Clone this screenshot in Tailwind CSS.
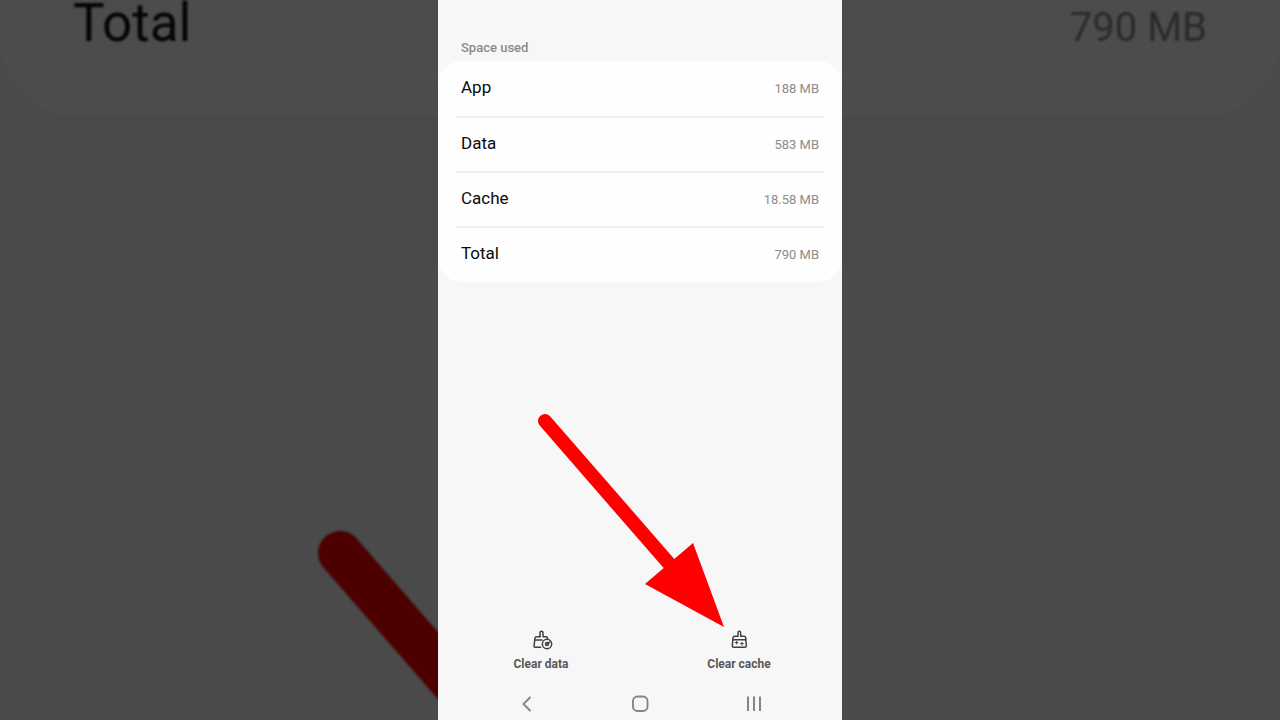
<!DOCTYPE html>
<html lang="en">

<head>
    <meta charset="UTF-8">
    <meta name="viewport" content="width=device-width, initial-scale=1.0">
    <title>Storage</title>
    <script src="https://cdn.jsdelivr.net/npm/@tailwindcss/browser@4"></script>
</head>

<body class="min-h-screen grid overflow-hidden bg-[#4a4a4a] font-[Roboto,sans-serif]">
    <!-- Dimmed, enlarged backdrop -->
    <div class="relative col-start-1 row-start-1 h-screen overflow-hidden" aria-hidden="true">
        <div class="flex items-start justify-between h-[117px] px-[73px] rounded-b-[76px] bg-[#4c4c4c] blur-[1px]">
            <span class="text-[53px] leading-[47px] text-[#050505]">Total</span>
            <span class="text-[40px] leading-[56px] text-[#2a2a2a]">790 MB</span>
        </div>
        <svg class="absolute left-0 top-0 blur-[1px]" width="640" height="720" viewBox="0 0 640 720" fill="none">
            <path d="M340 553L600 852" stroke="#4d0000" stroke-width="44" stroke-linecap="round" />
        </svg>
    </div>

    <!-- Phone screen -->
    <main class="relative col-start-1 row-start-1 w-full max-w-[404px] min-h-screen mx-auto flex flex-col bg-[#f7f7f7]">
        <h1 class="px-[23px] pt-10 pb-[5px] text-[13px] leading-4 font-medium text-[#8a8a8a]">Space used</h1>

        <dl class="px-[18px] rounded-3xl bg-[#fefefe]">
            <div class="flex items-baseline justify-between h-[57px] pt-[14px] px-[5px] border-b-2 border-[#f0f0f0]">
                <dt class="text-[17px] leading-6 text-[#0a0a0a]">App</dt>
                <dd class="text-[13px] leading-4 text-[#8c8c8c]">188 MB</dd>
            </div>
            <div class="flex items-baseline justify-between h-[55px] pt-[13px] px-[5px] border-b-2 border-[#f0f0f0]">
                <dt class="text-[17px] leading-6 text-[#0a0a0a]">Data</dt>
                <dd class="text-[13px] leading-4 text-[#8c8c8c]">583 MB</dd>
            </div>
            <div class="flex items-baseline justify-between h-[55px] pt-[13px] px-[5px] border-b-2 border-[#f0f0f0]">
                <dt class="text-[17px] leading-6 text-[#0a0a0a]">Cache</dt>
                <dd class="text-[13px] leading-4 text-[#8c8c8c]">18.58 MB</dd>
            </div>
            <div class="flex items-baseline justify-between h-[54px] pt-[13px] px-[5px]">
                <dt class="text-[17px] leading-6 text-[#0a0a0a]">Total</dt>
                <dd class="text-[13px] leading-4 text-[#8c8c8c]">790 MB</dd>
            </div>
        </dl>

        <div class="mt-auto grid grid-cols-2 px-1 pb-4">
            <button class="flex flex-col items-center gap-1.5 text-[12px] leading-4 font-bold text-[#585858]">
                <svg width="24" height="20" viewBox="87 30 72 60" fill="none" stroke="#404040" stroke-width="4.500" stroke-linejoin="round" stroke-linecap="round">
                    <path d="M120 50V38Q120 34 124.500 34Q129 34 129 38V50H138Q142 50 143 55" />
                    <path d="M120 50H110Q106 50 105 54L102 79Q102 82 105 82H122" />
                    <path d="M105 60H126" />
                    <circle cx="141" cy="72" r="14" />
                    <circle cx="141" cy="72" r="4.500" />
                    <path d="M141 72L149 66" />
                </svg>
                Clear data
            </button>
            <button class="flex flex-col items-center gap-1.5 text-[12px] leading-4 font-bold text-[#585858]">
                <svg width="24" height="20" viewBox="96 30 72 60" fill="none" stroke="#404040" stroke-width="4.500" stroke-linejoin="round" stroke-linecap="round">
                    <path d="M129 49V38Q129 34 133 34Q137 34 137 38V49H147Q151 49 152 53L154 78Q154 82 150 82H116Q112 82 112 78L114 53Q115 49 119 49Z" />
                    <path d="M114 59H152" />
                    <path d="M125 64V72M121 68H129M141 67V75M137 71H145" stroke-width="3" />
                </svg>
                Clear cache
            </button>
        </div>

        <nav class="flex items-center justify-between h-8 px-[77px]">
            <button aria-label="Back">
                <svg width="24" height="24" viewBox="0 0 24 24" fill="none" stroke="#858585" stroke-width="1.900">
                    <path d="M15.500 5L8.500 12L15.500 19" />
                </svg>
            </button>
            <button aria-label="Home">
                <svg width="24" height="24" viewBox="0 0 24 24" fill="none" stroke="#858585" stroke-width="1.900">
                    <rect x="5" y="4.500" width="14.500" height="14.500" rx="4.500" />
                </svg>
            </button>
            <button aria-label="Recent apps">
                <svg width="24" height="24" viewBox="0 0 24 24" fill="none" stroke="#858585" stroke-width="2">
                    <path d="M7 4.500V19M13 4.500V19M19 4.500V19" />
                </svg>
            </button>
        </nav>

        <!-- Arrow pointing at Clear cache -->
        <svg class="absolute left-0 top-0 pointer-events-none" width="404" height="720" viewBox="438 0 404 720" fill="none" aria-hidden="true">
            <path d="M545 421L672 567" stroke="#ff0000" stroke-width="14" stroke-linecap="round" />
            <path d="M693 543L645 584L724 627Z" fill="#ff0000" />
        </svg>
    </main>
</body>

</html>
